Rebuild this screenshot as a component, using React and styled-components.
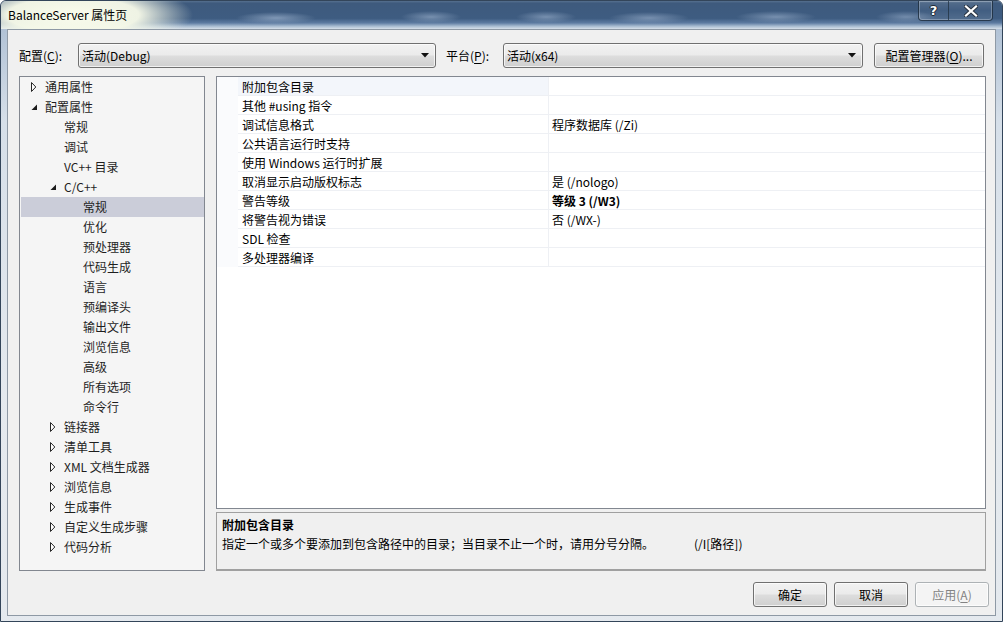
import React from 'react';
import styled, { createGlobalStyle } from 'styled-components';

const treeItems = [
  { level: 0, label: '通用属性', state: 'closed' },
  { level: 0, label: '配置属性', state: 'open' },
  { level: 1, label: '常规' },
  { level: 1, label: '调试' },
  { level: 1, label: 'VC++ 目录' },
  { level: 1, label: 'C/C++', state: 'open' },
  { level: 2, label: '常规', selected: true },
  { level: 2, label: '优化' },
  { level: 2, label: '预处理器' },
  { level: 2, label: '代码生成' },
  { level: 2, label: '语言' },
  { level: 2, label: '预编译头' },
  { level: 2, label: '输出文件' },
  { level: 2, label: '浏览信息' },
  { level: 2, label: '高级' },
  { level: 2, label: '所有选项' },
  { level: 2, label: '命令行' },
  { level: 1, label: '链接器', state: 'closed' },
  { level: 1, label: '清单工具', state: 'closed' },
  { level: 1, label: 'XML 文档生成器', state: 'closed' },
  { level: 1, label: '浏览信息', state: 'closed' },
  { level: 1, label: '生成事件', state: 'closed' },
  { level: 1, label: '自定义生成步骤', state: 'closed' },
  { level: 1, label: '代码分析', state: 'closed' },
];

const properties = [
  { name: '附加包含目录', value: '', active: true },
  { name: '其他 #using 指令', value: '' },
  { name: '调试信息格式', value: '程序数据库 (/Zi)' },
  { name: '公共语言运行时支持', value: '' },
  { name: '使用 Windows 运行时扩展', value: '' },
  { name: '取消显示启动版权标志', value: '是 (/nologo)' },
  { name: '警告等级', value: '等级 3 (/W3)', bold: true },
  { name: '将警告视为错误', value: '否 (/WX-)' },
  { name: 'SDL 检查', value: '' },
  { name: '多处理器编译', value: '' },
];

function Expander({ state }) {
  if (state === 'open') {
    return (
      <ExpanderBox>
        <svg width="7" height="7" viewBox="0 0 7 7">
          <polygon points="6,0.5 6,6 0.5,6" fill="#1b1b1b" />
        </svg>
      </ExpanderBox>
    );
  }
  if (state === 'closed') {
    return (
      <ExpanderBox>
        <svg width="6" height="10" viewBox="0 0 6 10">
          <polygon points="0.5,0.5 4.8,5 0.5,9.5" fill="#fff" stroke="#262626" strokeWidth="1" />
        </svg>
      </ExpanderBox>
    );
  }
  return <ExpanderBox />;
}

function DropArrow() {
  return (
    <svg width="8" height="5" viewBox="0 0 8 5">
      <polygon points="0,0 8,0 4,4.5" fill="#111" />
    </svg>
  );
}

export default function App() {
  return (
    <>
      <GlobalStyle />
      <Window>
        <TitleBar>
          <Title>BalanceServer 属性页</Title>
          <Controls>
            <CtrlButton>
              <HelpGlyph>?</HelpGlyph>
            </CtrlButton>
            <CtrlButton $wide>
              <svg width="14" height="12" viewBox="0 0 14 12">
                <path d="M2 1.5 L12 10.5 M12 1.5 L2 10.5" stroke="#2a3542" strokeWidth="4.2" strokeLinecap="square" />
                <path d="M2 1.5 L12 10.5 M12 1.5 L2 10.5" stroke="#ffffff" strokeWidth="2.2" strokeLinecap="square" />
              </svg>
            </CtrlButton>
          </Controls>
        </TitleBar>

        <Client>
          <ConfigRow>
            <FieldLabel $width={59}>配置(<u>C</u>):</FieldLabel>
            <Combo $width={358}>
              <span>活动(Debug)</span>
              <DropArrow />
            </Combo>
            <FieldLabel $width={57} $gap={10}>平台(<u>P</u>):</FieldLabel>
            <Combo $width={360}>
              <span>活动(x64)</span>
              <DropArrow />
            </Combo>
            <Button $width={110} $gap={11}>配置管理器(<u>O</u>)...</Button>
          </ConfigRow>

          <Main>
            <Tree>
              {treeItems.map((item, i) => (
                <TreeRow key={i} $level={item.level} $selected={item.selected}>
                  <Expander state={item.state} />
                  <span>{item.label}</span>
                </TreeRow>
              ))}
            </Tree>

            <RightColumn>
              <Grid>
                {properties.map((p, i) => (
                  <PropRow key={i}>
                    <Margin />
                    <PropName $active={p.active}>{p.name}</PropName>
                    <PropValue $bold={p.bold}>{p.value}</PropValue>
                  </PropRow>
                ))}
              </Grid>
              <Description>
                <DescTitle>附加包含目录</DescTitle>
                <DescText>
                  指定一个或多个要添加到包含路径中的目录；当目录不止一个时，请用分号分隔。
                  <Switch>(/I[路径])</Switch>
                </DescText>
              </Description>
            </RightColumn>
          </Main>

          <ButtonRow>
            <Button $width={74}>确定</Button>
            <Button $width={74}>取消</Button>
            <Button $width={74} $disabled>应用(<u>A</u>)</Button>
          </ButtonRow>
        </Client>
      </Window>
    </>
  );
}

const GlobalStyle = createGlobalStyle`
  html, body {
    margin: 0;
    padding: 0;
  }
  body {
    width: 1003px;
    height: 622px;
    overflow: hidden;
    font-family: "Noto Sans CJK SC", "Noto Sans", sans-serif;
    font-size: 12px;
    color: #000;
  }
  u {
    text-decoration: underline;
    text-underline-offset: 2px;
  }
`;

const Window = styled.div`
  box-sizing: border-box;
  width: 1003px;
  height: 622px;
  display: flex;
  flex-direction: column;
  padding: 0 6px 5px 6px;
  border: 1px solid #33455a;
  border-radius: 6px 6px 0 0;
  background:
    linear-gradient(to bottom, rgba(120, 150, 185, 0.55) 0, rgba(200, 214, 228, 0.4) 120px, rgba(232, 236, 240, 0.6) 400px),
    #dfe5ec;
`;

const TitleBar = styled.div`
  height: 28px;
  margin: 0 -6px;
  padding: 0 9px 0 7px;
  display: flex;
  align-items: flex-start;
  border-radius: 5px 5px 0 0;
  background:
    radial-gradient(ellipse 120px 32px at 72px 14px, rgba(250, 252, 236, 1) 0, rgba(246, 249, 232, 0.96) 55%, rgba(236, 242, 226, 0) 100%),
    radial-gradient(ellipse 40px 6px at 275px 17px, rgba(150, 172, 200, 0.75), rgba(150, 172, 200, 0) 100%),
    radial-gradient(ellipse 30px 6px at 430px 16px, rgba(150, 172, 200, 0.65), rgba(150, 172, 200, 0) 100%),
    radial-gradient(ellipse 30px 6px at 545px 16px, rgba(150, 172, 200, 0.65), rgba(150, 172, 200, 0) 100%),
    radial-gradient(ellipse 40px 6px at 648px 17px, rgba(150, 172, 200, 0.65), rgba(150, 172, 200, 0) 100%),
    radial-gradient(ellipse 40px 6px at 775px 16px, rgba(150, 172, 200, 0.65), rgba(150, 172, 200, 0) 100%),
    radial-gradient(ellipse 30px 6px at 905px 16px, rgba(150, 172, 200, 0.6), rgba(150, 172, 200, 0) 100%),
    linear-gradient(to bottom, #56708f 0, #3e5a7d 8%, #3e5c81 62%, #5c7aa0 78%, #a7bbd0 90%, #d7e0ea 100%);
`;

const Title = styled.div`
  line-height: 28px;
  font-size: 12px;
  color: #000;
`;

const Controls = styled.div`
  margin-left: auto;
  display: flex;
  height: 19px;
  border: 1px solid rgba(30, 45, 60, 0.8);
  border-top: none;
  border-radius: 0 0 4px 4px;
  box-shadow: inset 0 0 0 1px rgba(255, 255, 255, 0.25);
  overflow: hidden;
`;

const CtrlButton = styled.div`
  width: ${(p) => (p.$wide ? 43 : 29)}px;
  display: flex;
  align-items: center;
  justify-content: center;
  background: linear-gradient(to bottom, rgba(255, 255, 255, 0.12), rgba(255, 255, 255, 0.02) 50%, rgba(255, 255, 255, 0.1));
  & + & {
    border-left: 1px solid rgba(30, 45, 60, 0.7);
  }
`;

const HelpGlyph = styled.span`
  font-family: "DejaVu Sans", sans-serif;
  font-weight: bold;
  font-size: 13px;
  line-height: 1;
  color: #fff;
  text-shadow: 0 0 1px #1f2a36, 1px 0 0 #1f2a36, -1px 0 0 #1f2a36, 0 1px 0 #1f2a36, 0 -1px 0 #1f2a36;
`;

const Client = styled.div`
  flex: 1;
  display: flex;
  flex-direction: column;
  padding: 13px 0 0 11px;
  border: 1px solid #8e99a5;
  background: #f0f0f0;
`;

const ConfigRow = styled.div`
  display: flex;
  align-items: center;
  height: 25px;
`;

const FieldLabel = styled.div`
  width: ${(p) => p.$width}px;
  margin-left: ${(p) => p.$gap || 0}px;
  flex-shrink: 0;
  white-space: nowrap;
`;

const Combo = styled.div`
  box-sizing: border-box;
  width: ${(p) => p.$width}px;
  height: 25px;
  display: flex;
  align-items: center;
  justify-content: space-between;
  padding: 0 6px 0 3px;
  border: 1px solid #707070;
  border-radius: 3px;
  background: linear-gradient(to bottom, #f2f2f2 0, #ebebeb 48%, #dddddd 52%, #cfcfcf 100%);
  box-shadow: inset 0 0 0 1px rgba(255, 255, 255, 0.7);
`;

const Button = styled.div`
  box-sizing: border-box;
  width: ${(p) => p.$width}px;
  height: 25px;
  margin-left: ${(p) => p.$gap || 0}px;
  display: flex;
  align-items: center;
  justify-content: center;
  white-space: nowrap;
  border: 1px solid ${(p) => (p.$disabled ? '#adb2b5' : '#707070')};
  border-radius: 3px;
  color: ${(p) => (p.$disabled ? '#838383' : '#000')};
  background: ${(p) =>
    p.$disabled
      ? '#f4f4f4'
      : 'linear-gradient(to bottom, #f2f2f2 0, #ebebeb 48%, #dddddd 52%, #cfcfcf 100%)'};
  box-shadow: inset 0 0 0 1px rgba(255, 255, 255, 0.7);
`;

const Main = styled.div`
  display: flex;
  gap: 11px;
  height: 495px;
  margin-top: 8px;
`;

const Tree = styled.div`
  box-sizing: border-box;
  width: 186px;
  height: 100%;
  border: 1px solid #828790;
  background: #f5f5f5;
`;

const TreeRow = styled.div`
  height: 20px;
  margin: 0 0 0 1px;
  display: flex;
  align-items: center;
  padding-left: ${(p) => 9 + p.$level * 19}px;
  white-space: nowrap;
  line-height: 20px;
  color: #1e1e1e;
  background: ${(p) => (p.$selected ? '#cbcdd9' : 'transparent')};
`;

const ExpanderBox = styled.span`
  width: 15px;
  height: 20px;
  flex-shrink: 0;
  display: flex;
  align-items: center;
  padding-left: 1px;
  box-sizing: border-box;
`;

const RightColumn = styled.div`
  width: 770px;
  display: flex;
  flex-direction: column;
  gap: 3px;
`;

const Grid = styled.div`
  box-sizing: border-box;
  height: 433px;
  border: 1px solid #828790;
  background: #fff;
`;

const PropRow = styled.div`
  display: grid;
  grid-template-columns: 21px 311px 1fr;
  height: 19px;
`;

const Margin = styled.div`
  background: #fafbfd;
`;

const PropName = styled.div`
  box-sizing: border-box;
  padding: 1px 0 0 4px;
  line-height: 17px;
  white-space: nowrap;
  border-bottom: 1px solid #eef0f4;
  border-right: 1px solid #eef0f4;
  background: ${(p) => (p.$active ? '#f3f6fb' : '#fff')};
`;

const PropValue = styled.div`
  box-sizing: border-box;
  padding: 1px 0 0 3px;
  line-height: 17px;
  white-space: nowrap;
  font-weight: ${(p) => (p.$bold ? 700 : 400)};
  border-bottom: 1px solid #eef0f4;
`;

const Description = styled.div`
  box-sizing: border-box;
  height: 59px;
  padding: 2px 5px;
  border: 1px solid #a0a0a0;
  border-bottom-width: 2px;
  background: #f0f0f0;
`;

const DescTitle = styled.div`
  font-weight: 700;
  line-height: 19px;
`;

const DescText = styled.div`
  line-height: 19px;
  white-space: nowrap;
`;

const Switch = styled.span`
  margin-left: 40px;
`;

const ButtonRow = styled.div`
  display: flex;
  justify-content: flex-end;
  gap: 7px;
  margin-top: 11px;
  margin-right: 6px;
`;
